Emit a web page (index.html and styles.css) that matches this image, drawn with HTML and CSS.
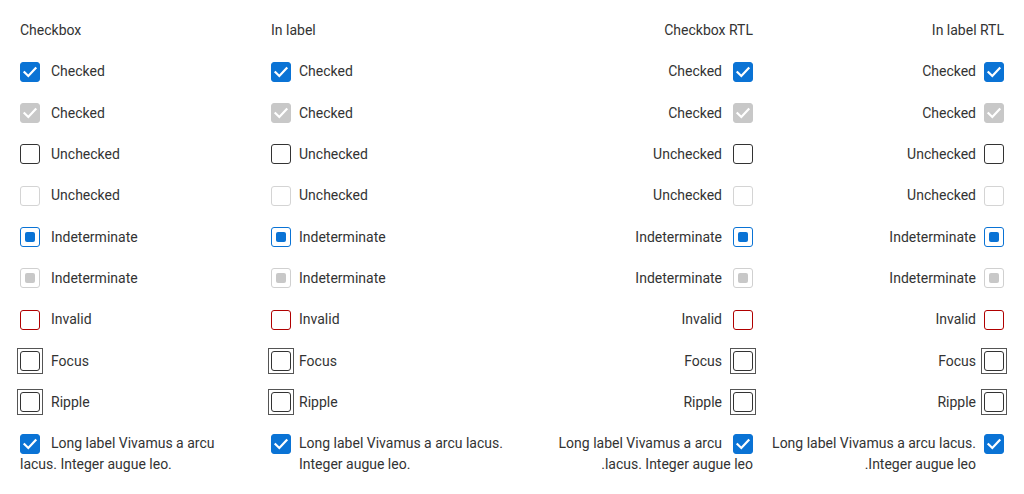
FILE: index.html
```html
<!DOCTYPE html>
<html lang="en">
<head>
<meta charset="utf-8">
<title>Checkbox</title>
<link rel="stylesheet" href="styles.css">
</head>
<body>
<div class="grid">
  <section class="col col-inline">
    <div class="head">Checkbox</div>
    <div class="item"><span class="cb checked"><svg viewBox="0 0 20 20"><path d="M4.5 10.3 L8.3 14 L15.5 6.3"/></svg></span>Checked</div>
    <div class="item"><span class="cb checked disabled"><svg viewBox="0 0 20 20"><path d="M4.5 10.3 L8.3 14 L15.5 6.3"/></svg></span>Checked</div>
    <div class="item"><span class="cb"></span>Unchecked</div>
    <div class="item"><span class="cb disabled"></span>Unchecked</div>
    <div class="item"><span class="cb ind"></span>Indeterminate</div>
    <div class="item"><span class="cb ind disabled"></span>Indeterminate</div>
    <div class="item"><span class="cb invalid"></span>Invalid</div>
    <div class="item"><span class="cb focus"></span>Focus</div>
    <div class="item"><span class="cb focus"></span>Ripple</div>
    <div class="item"><span class="cb checked"><svg viewBox="0 0 20 20"><path d="M4.5 10.3 L8.3 14 L15.5 6.3"/></svg></span>Long label Vivamus a arcu lacus. Integer augue leo.</div>
  </section>
  <section class="col col-flex">
    <div class="head">In label</div>
    <label class="item"><span class="cb checked"><svg viewBox="0 0 20 20"><path d="M4.5 10.3 L8.3 14 L15.5 6.3"/></svg></span><span class="txt">Checked</span></label>
    <label class="item"><span class="cb checked disabled"><svg viewBox="0 0 20 20"><path d="M4.5 10.3 L8.3 14 L15.5 6.3"/></svg></span><span class="txt">Checked</span></label>
    <label class="item"><span class="cb"></span><span class="txt">Unchecked</span></label>
    <label class="item"><span class="cb disabled"></span><span class="txt">Unchecked</span></label>
    <label class="item"><span class="cb ind"></span><span class="txt">Indeterminate</span></label>
    <label class="item"><span class="cb ind disabled"></span><span class="txt">Indeterminate</span></label>
    <label class="item"><span class="cb invalid"></span><span class="txt">Invalid</span></label>
    <label class="item"><span class="cb focus"></span><span class="txt">Focus</span></label>
    <label class="item"><span class="cb focus"></span><span class="txt">Ripple</span></label>
    <label class="item"><span class="cb checked"><svg viewBox="0 0 20 20"><path d="M4.5 10.3 L8.3 14 L15.5 6.3"/></svg></span><span class="txt">Long label Vivamus a arcu lacus. Integer augue leo.</span></label>
  </section>
  <section class="col col-inline rtl" dir="rtl">
    <div class="head">Checkbox RTL</div>
    <div class="item"><span class="cb checked"><svg viewBox="0 0 20 20"><path d="M4.5 10.3 L8.3 14 L15.5 6.3"/></svg></span>Checked</div>
    <div class="item"><span class="cb checked disabled"><svg viewBox="0 0 20 20"><path d="M4.5 10.3 L8.3 14 L15.5 6.3"/></svg></span>Checked</div>
    <div class="item"><span class="cb"></span>Unchecked</div>
    <div class="item"><span class="cb disabled"></span>Unchecked</div>
    <div class="item"><span class="cb ind"></span>Indeterminate</div>
    <div class="item"><span class="cb ind disabled"></span>Indeterminate</div>
    <div class="item"><span class="cb invalid"></span>Invalid</div>
    <div class="item"><span class="cb focus"></span>Focus</div>
    <div class="item"><span class="cb focus"></span>Ripple</div>
    <div class="item"><span class="cb checked"><svg viewBox="0 0 20 20"><path d="M4.5 10.3 L8.3 14 L15.5 6.3"/></svg></span>Long label Vivamus a arcu lacus. Integer augue leo.</div>
  </section>
  <section class="col col-flex rtl" dir="rtl">
    <div class="head">In label RTL</div>
    <label class="item"><span class="cb checked"><svg viewBox="0 0 20 20"><path d="M4.5 10.3 L8.3 14 L15.5 6.3"/></svg></span><span class="txt">Checked</span></label>
    <label class="item"><span class="cb checked disabled"><svg viewBox="0 0 20 20"><path d="M4.5 10.3 L8.3 14 L15.5 6.3"/></svg></span><span class="txt">Checked</span></label>
    <label class="item"><span class="cb"></span><span class="txt">Unchecked</span></label>
    <label class="item"><span class="cb disabled"></span><span class="txt">Unchecked</span></label>
    <label class="item"><span class="cb ind"></span><span class="txt">Indeterminate</span></label>
    <label class="item"><span class="cb ind disabled"></span><span class="txt">Indeterminate</span></label>
    <label class="item"><span class="cb invalid"></span><span class="txt">Invalid</span></label>
    <label class="item"><span class="cb focus"></span><span class="txt">Focus</span></label>
    <label class="item"><span class="cb focus"></span><span class="txt">Ripple</span></label>
    <label class="item"><span class="cb checked"><svg viewBox="0 0 20 20"><path d="M4.5 10.3 L8.3 14 L15.5 6.3"/></svg></span><span class="txt">Long label Vivamus a arcu lacus. Integer augue leo.</span></label>
  </section>
</div>
</body>
</html>
```

FILE: styles.css
```css
html, body {
  margin: 0;
  padding: 0;
  background: #ffffff;
}

body {
  font-family: Roboto, "Liberation Sans", Arial, sans-serif;
  font-size: 14px;
  line-height: 21px;
  color: #333333;
}

.grid {
  display: grid;
  grid-template-columns: repeat(4, 231px);
  column-gap: 20px;
  padding: 19.5px 20px 0 20px;
}

.col {
  display: flex;
  flex-direction: column;
  row-gap: 20.333px;
}

.head {
  line-height: 21px;
  margin-bottom: 0.5px;
}

.col-inline .item {
  display: block;
}

.col-inline .cb {
  display: inline-flex;
  vertical-align: top;
  margin-top: 0.5px;
  margin-inline-end: 11px;
}

.col-flex .item {
  display: flex;
  align-items: flex-start;
  column-gap: 8px;
}

.col-flex .cb {
  display: flex;
  flex: none;
  margin-top: 0.5px;
}

.col-flex .txt {
  flex: 1 1 auto;
  min-width: 0;
  margin-inline-end: -4px;
}

.cb {
  position: relative;
  width: 20px;
  height: 20px;
  box-sizing: border-box;
  border: 1px solid #333333;
  border-radius: 3px;
  background: #ffffff;
  align-items: center;
  justify-content: center;
}

.cb svg {
  width: 20px;
  height: 20px;
  flex: none;
  margin: -1px;
}

.cb svg path {
  fill: none;
  stroke: #ffffff;
  stroke-width: 2.2;
  stroke-linecap: square;
  stroke-linejoin: miter;
}

.cb.checked {
  background: #0a73d5;
  border-color: #0a73d5;
}

.cb.checked.disabled {
  background: #c8c8c8;
  border-color: #c8c8c8;
}

.cb.disabled {
  border-color: #d4d4d4;
}

.cb.ind {
  border-color: #0a73d5;
}

.cb.ind::after {
  content: "";
  width: 10px;
  height: 10px;
  border-radius: 2px;
  background: #0a73d5;
}

.cb.ind.disabled {
  border-color: #d0d0d0;
}

.cb.ind.disabled::after {
  background: #c8c8c8;
}

.cb.invalid {
  border-color: #b00000;
}

.cb.focus::before {
  content: "";
  position: absolute;
  top: -4px;
  left: -4px;
  right: -4px;
  bottom: -4px;
  border: 1px solid #555555;
}
```
